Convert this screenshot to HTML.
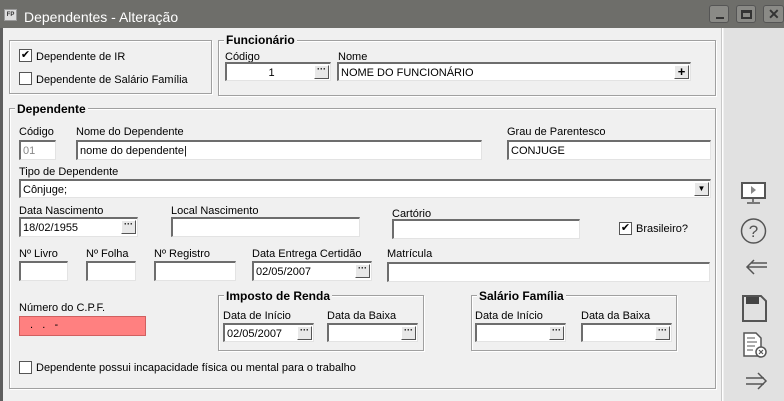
<!DOCTYPE html>
<html><head><meta charset="utf-8"><style>
*{box-sizing:border-box;margin:0;padding:0}
body{width:784px;height:401px;overflow:hidden;background:#f0f0f0;font-family:"Liberation Sans",sans-serif;font-size:11px;color:#000;position:relative}
.a{position:absolute}
.t{position:absolute;white-space:nowrap;line-height:12px}
.b{position:absolute;font-weight:bold;font-size:12px;background:#f0f0f0;padding:0 2px;line-height:12px;white-space:nowrap}
.g{position:absolute;border:1px solid #a0a0a0;box-shadow:inset 1px 1px 0 #fff,1px 1px 0 #fff}
.i{position:absolute;background:#fff;border-top:2px solid #6d6d6d;border-left:2px solid #6d6d6d;border-right:1px solid #e3e3e3;border-bottom:1px solid #e3e3e3;padding-left:2px;padding-top:2px;line-height:14px;white-space:nowrap;overflow:hidden}
.btn{position:absolute;top:1px;right:1px;width:15px;height:14px;background:#e8e8e8;border-right:1px solid #555;border-bottom:1px solid #555;border-top:1px solid #fff;border-left:1px solid #fff;font-size:9px;font-weight:bold;text-align:center;line-height:7px}
.cb{position:absolute;width:13px;height:13px;background:#fff;border:1px solid #555;font-size:11px;line-height:11px;text-align:center}
.tb{position:absolute;width:20px;height:18px;top:5px;border:1px solid #555;border-radius:3px;background:#8a8a86}
</style></head><body>
<div class="a" style="left:0;top:0;width:784px;height:28px;background:#6e6e6a"></div>
<div class="a" style="left:4px;top:9px;width:13px;height:12px;background:#ddd;border:1px solid #999;font-size:6px;font-weight:bold;line-height:10px;text-align:center;color:#333">FP</div>
<div class="t" style="left:24px;top:9px;color:#fff;font-size:14px;line-height:16px">Dependentes - Alteração</div>
<div class="tb" style="left:709px"><div class="a" style="left:6px;top:11px;width:8px;height:2px;background:#333"></div></div>
<div class="tb" style="left:736px"><div class="a" style="left:4px;top:4px;width:11px;height:9px;border:2px solid #333;border-top-width:3px"></div></div>
<div class="tb" style="left:763px;width:21px"><div class="a" style="left:4px;top:0;font-size:14px;font-weight:bold;color:#333">✕</div></div>
<div class="a" style="left:0;top:28px;width:3px;height:373px;background:#5e5e5e"></div>
<div class="a" style="left:721px;top:28px;width:2px;height:373px;background:#c8c8c8;border-right:1px solid #fff"></div>
<div class="a" style="left:724px;top:28px;width:60px;height:373px;background:#e1e1e1"></div>

<div class="g" style="left:9px;top:40px;width:203px;height:54px"></div>
<div class="cb" style="left:19px;top:49px">✔</div><div class="t" style="left:36px;top:51px">Dependente de IR</div>
<div class="cb" style="left:19px;top:72px"></div><div class="t" style="left:36px;top:74px">Dependente de Salário Família</div>

<div class="g" style="left:218px;top:40px;width:498px;height:56px"></div>
<div class="b" style="left:224px;top:34px">Funcionário</div>
<div class="t" style="left:225px;top:51px">Código</div>
<div class="i" style="left:225px;top:62px;width:106px;height:19px;text-align:center;padding-right:16px">1<div class="btn">···</div></div>
<div class="t" style="left:338px;top:51px">Nome</div>
<div class="i" style="left:337px;top:62px;width:354px;height:19px">NOME DO FUNCIONÁRIO<div class="btn" style="font-size:13px;line-height:12px">+</div></div>

<div class="g" style="left:9px;top:108px;width:707px;height:281px"></div>
<div class="b" style="left:15px;top:103px">Dependente</div>
<div class="t" style="left:19px;top:126px">Código</div>
<div class="i" style="left:19px;top:140px;width:37px;height:20px;color:#888">01</div>
<div class="t" style="left:76px;top:126px">Nome do Dependente</div>
<div class="i" style="left:76px;top:140px;width:406px;height:20px">nome do dependente|</div>
<div class="t" style="left:507px;top:126px">Grau de Parentesco</div>
<div class="i" style="left:507px;top:140px;width:204px;height:20px">CONJUGE</div>
<div class="t" style="left:19px;top:166px">Tipo de Dependente</div>
<div class="i" style="left:19px;top:179px;width:692px;height:19px">Cônjuge;<div class="btn" style="font-size:8px;line-height:12px">▼</div></div>
<div class="t" style="left:19px;top:205px">Data Nascimento</div>
<div class="i" style="left:19px;top:217px;width:119px;height:20px">18/02/1955<div class="btn">···</div></div>
<div class="t" style="left:171px;top:205px">Local Nascimento</div>
<div class="i" style="left:171px;top:217px;width:189px;height:20px"></div>
<div class="t" style="left:392px;top:208px">Cartório</div>
<div class="i" style="left:392px;top:219px;width:188px;height:20px"></div>
<div class="cb" style="left:619px;top:222px">✔</div><div class="t" style="left:636px;top:223px">Brasileiro?</div>
<div class="t" style="left:19px;top:248px">Nº Livro</div>
<div class="i" style="left:19px;top:261px;width:49px;height:20px"></div>
<div class="t" style="left:86px;top:248px">Nº Folha</div>
<div class="i" style="left:86px;top:261px;width:50px;height:20px"></div>
<div class="t" style="left:154px;top:248px">Nº Registro</div>
<div class="i" style="left:154px;top:261px;width:82px;height:20px"></div>
<div class="t" style="left:252px;top:248px">Data Entrega Certidão</div>
<div class="i" style="left:252px;top:261px;width:120px;height:20px">02/05/2007<div class="btn">···</div></div>
<div class="t" style="left:387px;top:248px">Matrícula</div>
<div class="i" style="left:387px;top:262px;width:323px;height:20px"></div>
<div class="t" style="left:19px;top:302px">Número do C.P.F.</div>
<div class="a" style="left:19px;top:316px;width:127px;height:20px;background:#ff8080;border:1px solid #d06060;padding-left:10px;line-height:17px">.&nbsp;&nbsp;&nbsp;.&nbsp;&nbsp;&nbsp;-</div>

<div class="g" style="left:218px;top:295px;width:206px;height:56px"></div>
<div class="b" style="left:224px;top:290px">Imposto de Renda</div>
<div class="t" style="left:223px;top:310px">Data de Início</div>
<div class="i" style="left:223px;top:323px;width:91px;height:19px">02/05/2007<div class="btn">···</div></div>
<div class="t" style="left:327px;top:310px">Data da Baixa</div>
<div class="i" style="left:327px;top:323px;width:91px;height:19px"><div class="btn">···</div></div>

<div class="g" style="left:471px;top:295px;width:206px;height:56px"></div>
<div class="b" style="left:477px;top:290px">Salário Família</div>
<div class="t" style="left:475px;top:310px">Data de Início</div>
<div class="i" style="left:475px;top:323px;width:91px;height:19px"><div class="btn">···</div></div>
<div class="t" style="left:581px;top:310px">Data da Baixa</div>
<div class="i" style="left:581px;top:323px;width:91px;height:19px"><div class="btn">···</div></div>

<div class="cb" style="left:19px;top:361px"></div><div class="t" style="left:36px;top:362px">Dependente possui incapacidade física ou mental para o trabalho</div>

<svg class="a" style="left:724px;top:170px" width="60" height="231" viewBox="0 0 60 231" fill="none" stroke="#555" stroke-width="1.5">
<rect x="18" y="13" width="23" height="15" fill="#fff" stroke="#555" stroke-width="2"/><path d="M27 16l5 4-5 4z" fill="#888" stroke="none"/><path d="M29 28v4M23 33h13"/>
<circle cx="29.5" cy="61" r="12"/><text x="29.5" y="67" font-family="Liberation Sans" font-size="17" fill="#555" stroke="none" text-anchor="middle">?</text>
<path d="M30 90l-7 7 7 7M23 97h20M27 93h16" stroke-width="1.5"/>
<path d="M19 126h18l5 5v20h-23z" stroke-width="2"/><rect x="22" y="127" width="13" height="7" fill="#444" stroke="none"/>
<path d="M20 163h12l5 5v18h-17z" fill="#fff"/><path d="M23 168h8M23 172h10M23 176h8M23 180h6" stroke-width="1"/><circle cx="37" cy="182" r="5" fill="#fff"/><path d="M35 180l4 4M39 180l-4 4" stroke-width="1.2"/>
<path d="M22 208h18M22 214h18M34 203l8 8-8 8"/>
</svg>
</body></html>
